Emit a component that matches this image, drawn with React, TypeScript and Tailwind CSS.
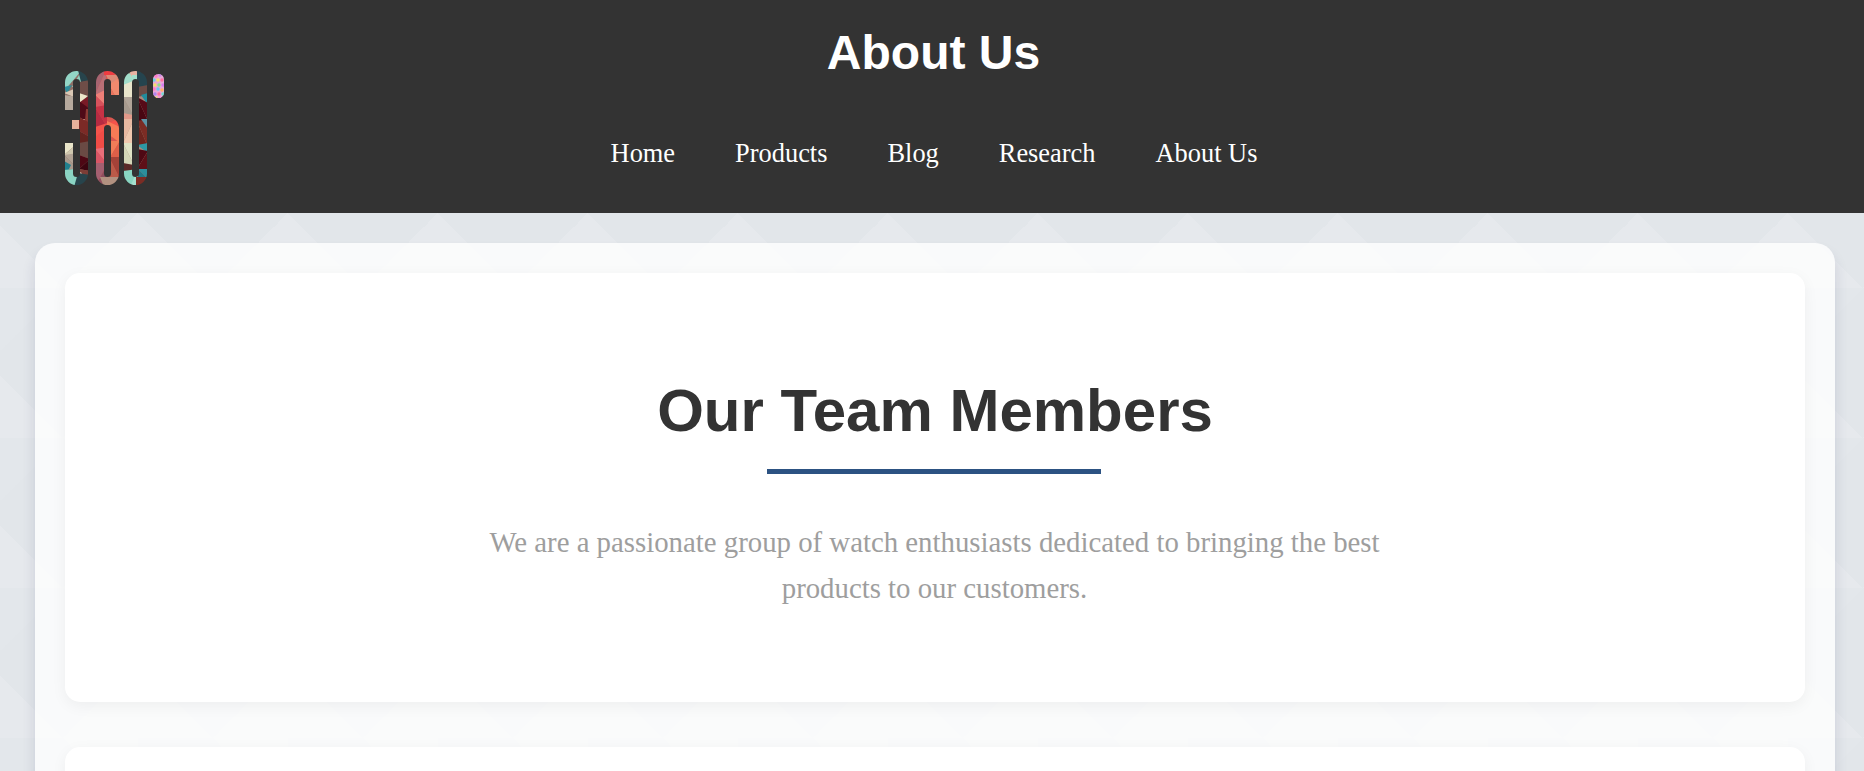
import React from "react";

const links = ["Home", "Products", "Blog", "Research", "About Us"];

// low-poly fill of the 360 logo: [points, colour]
const shards: [string, string][] = [
  // 3
  ["4,5 22,5 4,26", "#93d6c6"],
  ["22,5 12,22 22,22", "#8fd0c0"],
  ["4,22 12,20 7,29", "#2f8c9a"],
  ["18,5 30,5 30,19 21,17", "#27444c"],
  ["4,28 14,24 14,32", "#d9c8b4"],
  ["19,17 30,15 30,33 19,29", "#6f4d47"],
  ["4,30 18,32 18,47 4,47", "#b6a99d"],
  ["19,28 28,31 19,38", "#ece6c9"],
  ["19,38 30,30 30,44", "#7a1a26"],
  ["19,36 30,44 26,56 19,52", "#4f0a17"],
  ["26,44 30,44 30,60 25,56", "#8c3a34"],
  ["10,54 25,54 19,65 10,65", "#e7b19c"],
  ["19,52 30,58 30,72 19,66", "#7c2a26"],
  ["19,66 30,72 30,80 19,80", "#62231f"],
  ["19,78 30,76 30,94 19,90", "#6a4a44"],
  ["4,78 18,78 4,90", "#e9e5c9"],
  ["18,78 18,90 4,90", "#cfc7ae"],
  ["4,90 18,88 18,104", "#b1a294"],
  ["4,90 18,104 4,104", "#a8998c"],
  ["4,96 11,100 8,106 4,105", "#21808e"],
  ["19,90 30,94 19,104", "#4d0714"],
  ["30,94 30,106 19,104", "#3c0510"],
  ["19,104 30,106 30,114 22,112", "#7c3d36"],
  ["4,105 14,104 20,120 4,122", "#8bd4c3"],
  ["14,104 22,108 20,118", "#c9a896"],
  ["18,108 30,110 30,122 14,122", "#27444c"],
  // 6
  ["35,5 46,5 35,30", "#a76470"],
  ["46,5 46,28 35,30", "#b86f76"],
  ["44,4 58,4 52,12 44,10", "#ee3d42"],
  ["46,10 60,10 52,22", "#dc8a76"],
  ["49,20 60,12 60,40", "#f08a6e"],
  ["49,20 60,40 49,40", "#e9755f"],
  ["35,30 47,24 47,42", "#ee7f78"],
  ["35,30 47,42 35,42", "#d6525c"],
  ["35,42 47,40 47,62", "#c63245"],
  ["35,42 47,62 35,62", "#b62b42"],
  ["35,62 60,54 60,66 35,84", "#f4534b"],
  ["47,56 60,62 60,78 47,68", "#f77a56"],
  ["35,72 48,62 48,84 35,84", "#f04c46"],
  ["35,84 48,82 48,100", "#e96e79"],
  ["35,84 48,100 35,100", "#d85565"],
  ["49,76 60,76 49,94", "#f07c58"],
  ["60,76 60,94 49,94", "#dd5f48"],
  ["49,92 60,92 60,114", "#a44238"],
  ["49,92 60,114 49,114", "#bb5a48"],
  ["35,98 48,98 35,122", "#a45f70"],
  ["48,98 48,122 35,122", "#8f4f5f"],
  ["40,112 60,112 60,122 44,122", "#b29180"],
  // 0
  ["63,5 76,12 72,24 63,22", "#a2ddca"],
  ["68,5 82,5 80,12 72,12", "#e9b2a2"],
  ["72,10 80,10 72,22", "#a2ddca"],
  ["63,20 73,16 73,32 63,32", "#e9e5cb"],
  ["63,32 73,32 73,50", "#b0a498"],
  ["63,32 73,50 63,50", "#a69a8e"],
  ["63,48 73,50 73,56 63,56", "#e29a8a"],
  ["77,5 88,8 88,24 77,24", "#25444e"],
  ["77,22 88,20 88,30 77,32", "#6b4b45"],
  ["81,30 88,28 88,40", "#218c9c"],
  ["77,32 88,38 88,56", "#560a18"],
  ["77,32 88,56 77,56", "#480612"],
  ["63,54 74,54 63,78", "#e8b9a1"],
  ["74,54 74,78 63,78", "#efc8ae"],
  ["77,56 88,54 88,82", "#7b2c24"],
  ["77,56 88,82 77,80", "#6c241e"],
  ["81,54 88,54 88,64", "#5c93a4"],
  ["63,78 74,78 74,100", "#dfe3c5"],
  ["63,78 74,100 63,100", "#d3d7b8"],
  ["77,80 88,78 88,88", "#2d98a4"],
  ["77,84 88,86 77,104", "#4e0814"],
  ["88,86 88,104 77,104", "#5e0f18"],
  ["63,98 74,100 78,106 63,106", "#5a2a28"],
  ["63,106 78,104 72,122 63,122", "#89d5c1"],
  ["70,122 78,104 78,122", "#a4e0cf"],
  ["78,104 88,104 88,114", "#2b8f9c"],
  ["78,104 88,114 78,114", "#207a88"],
  ["76,112 88,112 88,122 76,122", "#7b2c24"],
];

const confetti: [number, number, string][] = [
  [96, 11, "#ff7ac6"], [100, 10, "#c98be8"], [94, 15, "#67d7e6"], [98, 15, "#f5e06a"], [102, 15, "#ff6f9f"],
  [95, 20, "#f5e06a"], [99, 20, "#8ee08c"], [103, 20, "#d77af0"], [94, 24, "#ff7ac6"], [98, 24, "#6ac7f2"],
  [102, 25, "#ffb066"], [95, 29, "#b184f0"], [99, 29, "#ff6f9f"], [103, 29, "#6fe0d0"], [96, 33, "#f5e06a"],
  [100, 33, "#ff8ad0"],
];

function Logo() {
  return (
    <svg width="110" height="125" viewBox="0 0 110 125" className="shrink-0">
      <defs>
        <mask id="digits">
          <g fill="none" stroke="#fff" strokeWidth="8">
            <path d="M9 45V17.5a7.5 7.5 0 0 1 15 0v91a7.5 7.5 0 0 1-15 0V78" />
            <path d="M55 30V17.5a7.5 7.5 0 0 0-15 0v91a7.5 7.5 0 0 0 15 0V63.5a7.5 7.5 0 0 0-15 0" />
            <rect x="68" y="10" width="15" height="106" rx="7.5" />
          </g>
          <rect x="12" y="55" width="10" height="9" fill="#fff" />
        </mask>
        <clipPath id="degree">
          <rect x="93" y="9" width="11" height="24" rx="5.5" />
        </clipPath>
      </defs>
      <g mask="url(#digits)">
        <rect x="4" y="4" width="26" height="118" fill="#8f6f66" />
        <rect x="35" y="4" width="26" height="118" fill="#d9574f" />
        <rect x="63" y="4" width="26" height="118" fill="#a98a7c" />
        {shards.map(([points, color]) => (
          <polygon key={points} points={points} fill={color} />
        ))}
      </g>
      <g clipPath="url(#degree)">
        <rect x="93" y="9" width="11" height="24" fill="#e9a9d8" />
        {confetti.map(([cx, cy, color]) => (
          <circle key={`${cx}-${cy}`} cx={cx} cy={cy} r="1.7" fill={color} />
        ))}
      </g>
    </svg>
  );
}

export default function App() {
  return (
    <div className="h-screen overflow-hidden bg-[#e2e6ea] bg-[linear-gradient(135deg,rgba(255,255,255,0.03)_25%,transparent_25%),linear-gradient(225deg,rgba(255,255,255,0.1)_25%,transparent_25%),linear-gradient(45deg,rgba(255,255,255,0.12)_25%,transparent_25%),linear-gradient(315deg,rgba(255,255,255,0.12)_25%,transparent_25%)] bg-size-[150px_150px] bg-position-[138px_288px]">
      <header className="flex h-[213px] items-end bg-[#333333] pb-[23px] pl-[60px] pr-[164px] text-white">
        <Logo />
        <div className="flex flex-1 flex-col items-center self-stretch">
          <h1 className="mt-[24px] mr-[3px] font-['Liberation_Sans',sans-serif] text-[48px] leading-[58px] font-bold">
            About Us
          </h1>
          <nav className="mt-[55px] mr-[2px] flex gap-[60px] font-['Liberation_Serif',serif] text-[26.4px] leading-[32px]">
            {links.map((link) => (
              <a key={link} href="#">
                {link}
              </a>
            ))}
          </nav>
        </div>
      </header>

      <main className="mt-[30px] ml-[35px] flex w-[1800px] flex-col gap-[45px] rounded-[20px] bg-white/80 p-[30px] shadow-[0_10px_14px_rgba(40,45,90,0.14)]">
        <section className="flex h-[429px] flex-col items-center rounded-[15px] bg-white pt-[102px] shadow-[0_4px_15px_rgba(0,0,0,0.05)]">
          <h2 className="font-['Liberation_Sans',sans-serif] text-[60px] leading-[72px] font-bold text-[#333333]">
            Our Team Members
          </h2>
          <div className="mt-[22px] mr-[2px] h-[5px] w-[334px] bg-[#2c5282]" />
          <p className="mt-[45px] mr-[1px] w-[900px] text-center font-['Liberation_Serif',serif] text-[28.8px] leading-[46px] text-[#9e9e9e]">
            We are a passionate group of watch enthusiasts dedicated to bringing the best products to our customers.
          </p>
        </section>
        <section className="h-[400px] rounded-[15px] bg-white shadow-[0_4px_15px_rgba(0,0,0,0.05)]" />
      </main>
    </div>
  );
}
